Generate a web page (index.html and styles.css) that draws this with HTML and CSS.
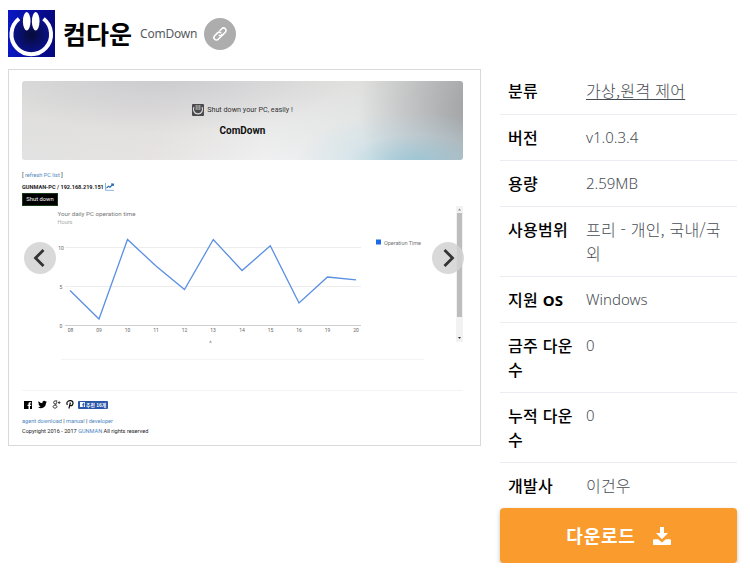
FILE: index.html
```html
<!DOCTYPE html>
<html lang="ko">
<head>
    <meta charset="UTF-8">
    <meta name="viewport" content="width=device-width, initial-scale=1.0">
    <title>컴다운</title>
    <link rel="stylesheet" href="styles.css">
</head>
<body>
    <header class="app-header">
        <svg class="app-icon" viewBox="0 0 47 47">
            <defs>
                <linearGradient id="blue" x1="0" y1="0" x2="1" y2="0">
                    <stop offset="0" stop-color="#0a17c4"/>
                    <stop offset="1" stop-color="#06087c"/>
                </linearGradient>
                <radialGradient id="dark">
                    <stop offset="0" stop-color="#070b38"/>
                    <stop offset="1" stop-color="#0a118c"/>
                </radialGradient>
            </defs>
            <rect width="47" height="47" fill="url(#blue)"/>
            <circle cx="23.5" cy="25" r="19" fill="url(#dark)"/>
            <path d="M11 8.800A19.800 19.800 0 1 0 35.500 8.800" fill="none" stroke="#fff" stroke-width="4"/>
            <ellipse cx="18.700" cy="11.200" rx="3.800" ry="9.200" fill="#fff"/>
            <ellipse cx="27.700" cy="11.200" rx="3.800" ry="9.200" fill="#fff"/>
        </svg>
        <h1>컴다운</h1>
        <span class="sub-name">ComDown</span>
        <a class="link-btn" href="#">
            <svg viewBox="0 0 16 16"><g fill="none" stroke="#fff" stroke-width="1.600" stroke-linecap="round" transform="rotate(-45 8 8)"><path d="M8.800 9.600A2.500 2.500 0 0 1 7 10.500H3a2.500 2.500 0 0 1 0-5h4a2.500 2.500 0 0 1 2.400 2"/><path d="M7.200 6.400M6.600 8.500A2.500 2.500 0 0 0 9 10.500h4a2.500 2.500 0 0 0 0-5H10.500"/></g></svg>
        </a>
    </header>
    <main>
        <section class="preview">
            <div class="banner">
                <p class="slogan">
                    <svg class="slogan-icon" viewBox="0 0 12 12">
                        <rect width="12" height="12" rx="1" fill="#4a4a4c"/>
                        <path d="M2 3A4.600 4.600 0 1 0 10 3" fill="none" stroke="#d8d8da" stroke-width="1.200"/>
                        <path d="M4.200 1v5M6 1v5M7.800 1v5" stroke="#d8d8da" stroke-width=".8"/>
                    </svg>
                    <span>Shut down your PC, easily !</span>
                </p>
                <h2>ComDown</h2>
            </div>
            <p class="refresh">[ <a href="#">refresh PC list</a> ]</p>
            <p class="pc-name">GUNMAN-PC / 192.168.219.151
                <svg class="chart-icon" viewBox="0 0 9 8"><path d="M.5 0v7.300H9" fill="none" stroke="#7eaad4" stroke-width=".9"/><path d="M1.500 5.200l2-2 1.500 1L8 1.200M6 1h2.300v2" fill="none" stroke="#2468ac" stroke-width="1.200"/></svg>
            </p>
            <button class="shutdown">Shut down</button>
            <div class="chart-row">
                <svg class="chart" viewBox="0 0 420 140">
                    <text x="35.500" y="9.500" class="chart-title" textLength="78">Your daily PC operation time</text>
                    <text x="35.500" y="18" class="chart-unit" textLength="15">Hours</text>
                    <path d="M43 41.500H339M43 80.500H339" stroke="#ededed"/>
                    <path d="M43 119.500H339" stroke="#cfcfcf"/>
                    <g class="axis">
                        <text x="39" y="43.500">10</text>
                        <text x="39" y="82.500">5</text>
                        <text x="39" y="121.500">0</text>
                        <text x="48.500" y="126">08</text>
                        <text x="77" y="126">09</text>
                        <text x="105.500" y="126">10</text>
                        <text x="134" y="126">11</text>
                        <text x="162.500" y="126">12</text>
                        <text x="191" y="126">13</text>
                        <text x="220" y="126">14</text>
                        <text x="248.500" y="126">15</text>
                        <text x="277" y="126">16</text>
                        <text x="305.500" y="126">19</text>
                        <text x="334" y="126">20</text>
                    </g>
                    <polyline points="48,84.500 77,113 105.500,33.500 134,60 162.500,83.500 191.300,33.500 220,64.500 248.300,39.800 277,97 305.500,71 334,73.800" fill="none" stroke="#5a8fe4" stroke-width="1.300"/>
                    <rect x="354" y="33.500" width="5" height="5" fill="#1d6ae8"/>
                    <text x="362" y="39" class="legend" textLength="37">Operation Time</text>
                    <path d="M187 136.500l1.500-2 1.500 2z" fill="#999"/>
                </svg>
                <svg class="scrollbar" viewBox="0 0 7 136">
                    <rect width="7" height="136" fill="#f2f2f2"/>
                    <rect x="1" y="7" width="5" height="104" fill="#bdbdbd"/>
                    <path d="M2 4.500l1.500-2 1.500 2z" fill="#888"/>
                    <path d="M2 131l1.500 2 1.500-2z" fill="#333"/>
                </svg>
            </div>
            <hr class="inner-line">
            <hr class="line">
            <div class="social">
                <svg viewBox="0 0 8 8" class="facebook"><path d="M0 0h8v8H6V5h1.200V3.700H6V2.500h1.200V1.200H5.800Q4.500 1.200 4.500 2.500V3.700H3.500V5h1V8H0z"/></svg>
                <svg viewBox="0 0 24 24" class="twitter"><path d="M24 4.600a10 10 0 0 1-2.800.8 5 5 0 0 0 2.100-2.700 10 10 0 0 1-3.100 1.200 4.900 4.900 0 0 0-8.400 4.500A14 14 0 0 1 1.700 3.200a4.900 4.900 0 0 0 1.500 6.500 5 5 0 0 1-2.200-.6 4.900 4.900 0 0 0 3.900 4.900 5 5 0 0 1-2.200.1 4.900 4.900 0 0 0 4.600 3.400A9.900 9.900 0 0 1 0 19.500 14 14 0 0 0 21.500 7.100 10 10 0 0 0 24 4.600z"/></svg>
                <svg viewBox="0 0 9 9" class="gplus"><path d="M5.300.9H3.200a1.500 1.500 0 1 0 0 3.100 1.500 1.500 0 0 0 1-2.700M3.300 4l1 1M3 5.200c-2.600 0-2.600 2.900 0 2.900s2.600-2.900 0-2.900M7.200 1.300v2.600M5.900 2.600h2.600" fill="none" stroke="#222" stroke-width=".9"/></svg>
                <svg viewBox="0 0 8 9" class="pinterest"><path d="M1.500 5Q.4 3.600 1.300 2 2.500.4 4.700.6 7.200 1 7 3.300 6.600 5.700 4.700 5.700 3.900 5.600 3.700 5M4.400 2.500L2.900 8.500" fill="none" stroke="#111" stroke-width="1.200"/></svg>
                <span class="recommend"><svg viewBox="0 0 8 8"><path fill="#fff" d="M0 0h8v8H6V5h1.200V3.700H6V2.500h1.200V1.200H5.800Q4.500 1.200 4.500 2.500V3.700H3.500V5h1V8H0z"/></svg>추천 16개</span>
            </div>
            <p class="footer-links"><a href="#">agent download</a> | <a href="#">manual</a> | <a href="#">developer</a></p>
            <p class="copyright">Copyright 2016 - 2017 <a href="#">GUNMAN</a> All rights reserved</p>
            <button class="arrow prev"><svg viewBox="0 0 32 32"><path d="M19.500 8L11.500 16l8 8" fill="none" stroke="#333" stroke-width="2.800"/></svg></button>
            <button class="arrow next"><svg viewBox="0 0 32 32"><path d="M12.500 8l8 8-8 8" fill="none" stroke="#333" stroke-width="2.800"/></svg></button>
        </section>
        <aside>
            <dl class="info">
                <div class="row"><dt>분류</dt><dd><a href="#">가상,원격 제어</a></dd></div>
                <div class="row"><dt>버전</dt><dd class="latin">v1.0.3.4</dd></div>
                <div class="row"><dt>용량</dt><dd class="latin">2.59MB</dd></div>
                <div class="row"><dt>사용범위</dt><dd>프리 - 개인, 국내/국<br>외</dd></div>
                <div class="row"><dt>지원 <b>OS</b></dt><dd class="latin">Windows</dd></div>
                <div class="row"><dt>금주 다운<br>수</dt><dd class="latin">0</dd></div>
                <div class="row"><dt>누적 다운<br>수</dt><dd class="latin">0</dd></div>
                <div class="row"><dt>개발사</dt><dd>이건우</dd></div>
            </dl>
            <button class="download"><span>다운로드</span>
                <svg viewBox="0 0 18 18"><path fill="#fff" d="M7 0h4v6h4L9 12.300 3 6h4zM.8 12.300h4.400L9 15.600l3.800-3.300h4.400q.8 0 .8.800v4.100q0 .8-.8.800H.8q-.8 0-.8-.8v-4.100q0-.8.8-.8z"/></svg>
            </button>
        </aside>
    </main>
</body>
</html>
```

FILE: styles.css
```css
* {
    margin: 0;
    padding: 0;
    box-sizing: border-box;
}

body {
    padding: 10px 8px 0;
    background: #fff;
    font-family: "Noto Sans CJK KR", sans-serif;
    font-size: 16px;
    line-height: 24px;
    color: #000;
}

button {
    border: none;
    font-family: inherit;
}

.app-header {
    display: flex;
    align-items: center;
    height: 47px;
}

.app-icon {
    width: 47px;
    height: 47px;
}

h1 {
    margin-left: 8px;
    padding-bottom: 2px;
    width: 77px;
    font-size: 25px;
    line-height: 40px;
    font-weight: 700;
    white-space: nowrap;
}

.sub-name {
    width: 64px;
    font-family: "Noto Sans", sans-serif;
    font-size: 12px;
    letter-spacing: -0.2px;
    color: #555b61;
}

.link-btn {
    display: flex;
    align-items: center;
    justify-content: center;
    width: 32px;
    height: 32px;
    border-radius: 50%;
    background: #adadad;
}

.link-btn svg {
    width: 16px;
    height: 16px;
}

main {
    display: flex;
    gap: 19px;
    margin-top: 12px;
}

.preview {
    position: relative;
    width: 473px;
    height: 377px;
    padding: 11px 16px 0 13px;
    border: 1px solid #d9d9d9;
    font-family: Roboto, sans-serif;
    font-size: 5.6px;
    line-height: 10px;
    color: #222;
}

.preview a {
    color: #4d87c0;
    text-decoration: none;
}

.banner {
    width: 441px;
    height: 79px;
    padding-top: 23px;
    border-radius: 3px;
    text-align: center;
    background:
        radial-gradient(ellipse 120px 52px at 89% 105%, rgba(140, 195, 215, .75), rgba(180, 215, 228, .3) 55%, rgba(220, 235, 240, 0)),
        radial-gradient(ellipse 130px 130px at 106% 35%, rgba(140, 142, 145, .85), rgba(190, 190, 190, 0)),
        radial-gradient(ellipse 190px 60px at 32% -10%, rgba(195, 195, 202, .75), rgba(205, 205, 210, 0)),
        linear-gradient(180deg, rgba(220, 219, 216, .7), rgba(240, 240, 240, 0)),
        linear-gradient(90deg, #e2e2e2, #e6e3e2 30%, #f0f0f1 55%, #e8eced 75%, #d2d6d9);
}

.slogan {
    display: flex;
    align-items: center;
    justify-content: center;
    gap: 3px;
    height: 12px;
    font-size: 7.2px;
    color: #333;
}

.slogan-icon {
    width: 12px;
    height: 12px;
}

.banner h2 {
    margin-top: 8px;
    font-size: 10px;
    line-height: 14px;
    color: #111;
}

.refresh {
    margin-top: 10px;
}

.pc-name {
    display: flex;
    align-items: center;
    gap: 1px;
    margin-top: 2px;
    font-weight: 700;
}

.chart-icon {
    width: 9px;
    height: 8px;
}

.shutdown {
    display: block;
    width: 36px;
    height: 13px;
    margin-top: 1px;
    border: 1px solid #163b16;
    background: #000;
    font-size: 5.8px;
    line-height: 11px;
    color: #fff;
}

.chart-row {
    display: flex;
    justify-content: space-between;
    width: 441px;
    height: 136px;
}

.chart {
    width: 420px;
    height: 140px;
}

.chart text {
    font-size: 5.6px;
    fill: #777;
}

.chart .chart-title {
    font-size: 6.2px;
}

.chart .chart-unit {
    fill: #aaa;
}

.chart .axis text {
    font-size: 5px;
    text-anchor: middle;
    fill: #666;
}

.scrollbar {
    width: 7px;
    height: 136px;
}

hr {
    border: none;
    border-top: 1px solid #f4f4f4;
}

.inner-line {
    width: 363px;
    margin: 17px 0 0 39px;
}

.line {
    width: 441px;
    margin-top: 30px;
}

.social {
    display: flex;
    align-items: center;
    height: 9px;
    margin-top: 9px;
    padding-left: 2px;
}

.facebook {
    width: 8px;
    height: 8px;
}

.twitter {
    width: 9px;
    height: 9px;
    margin-left: 6px;
}

.gplus {
    width: 9px;
    height: 9px;
    margin-left: 5px;
}

.pinterest {
    width: 8px;
    height: 9px;
    margin-left: 5px;
}

.recommend {
    display: flex;
    align-items: center;
    gap: 1px;
    width: 30px;
    height: 8px;
    margin-left: 4px;
    padding-left: 2px;
    border-radius: 1px;
    background: #2a55a8;
    font-family: "Noto Sans CJK KR", sans-serif;
    font-size: 4.8px;
    font-weight: 700;
    white-space: nowrap;
    color: #fff;
}

.recommend svg {
    width: 5px;
    height: 5px;
}

.footer-links {
    margin-top: 7px;
}

.arrow {
    position: absolute;
    top: 172px;
    width: 32px;
    height: 32px;
    border-radius: 50%;
    background: rgba(210, 210, 210, .85);
}

.arrow svg {
    display: block;
}

.prev {
    left: 15px;
}

.next {
    right: 16px;
}

aside {
    width: 237px;
    margin-top: -1px;
}

.row {
    display: flex;
    padding: 10px 0 11px 8px;
    border-bottom: 1px solid #ececf2;
}

.row:first-child {
    padding-bottom: 12px;
}

.row:last-child {
    border-bottom: none;
}

dt {
    width: 78px;
    font-weight: 500;
    letter-spacing: 0.3px;
    white-space: nowrap;
}

dt b {
    font-family: "Noto Sans", sans-serif;
    font-size: 15px;
    line-height: 1;
    letter-spacing: 0;
}

dd {
    font-weight: 300;
    letter-spacing: 0.2px;
    color: #474d53;
    white-space: nowrap;
}

dd a {
    color: inherit;
    letter-spacing: 0.3px;
    text-underline-offset: 2px;
}

dd.latin {
    font-family: "Noto Sans", sans-serif;
    font-size: 15px;
    letter-spacing: 0;
}

.download {
    display: flex;
    align-items: center;
    justify-content: center;
    gap: 17px;
    width: 237px;
    height: 55px;
    border-radius: 4px;
    background: #f99b2d;
    box-shadow: 0 2px 4px rgba(0, 0, 0, .25);
    font-size: 18px;
    font-weight: 700;
    letter-spacing: 0.8px;
    color: #fff;
}

.download span {
    padding-bottom: 2px;
}

.download svg {
    width: 18px;
    height: 18px;
}
```
